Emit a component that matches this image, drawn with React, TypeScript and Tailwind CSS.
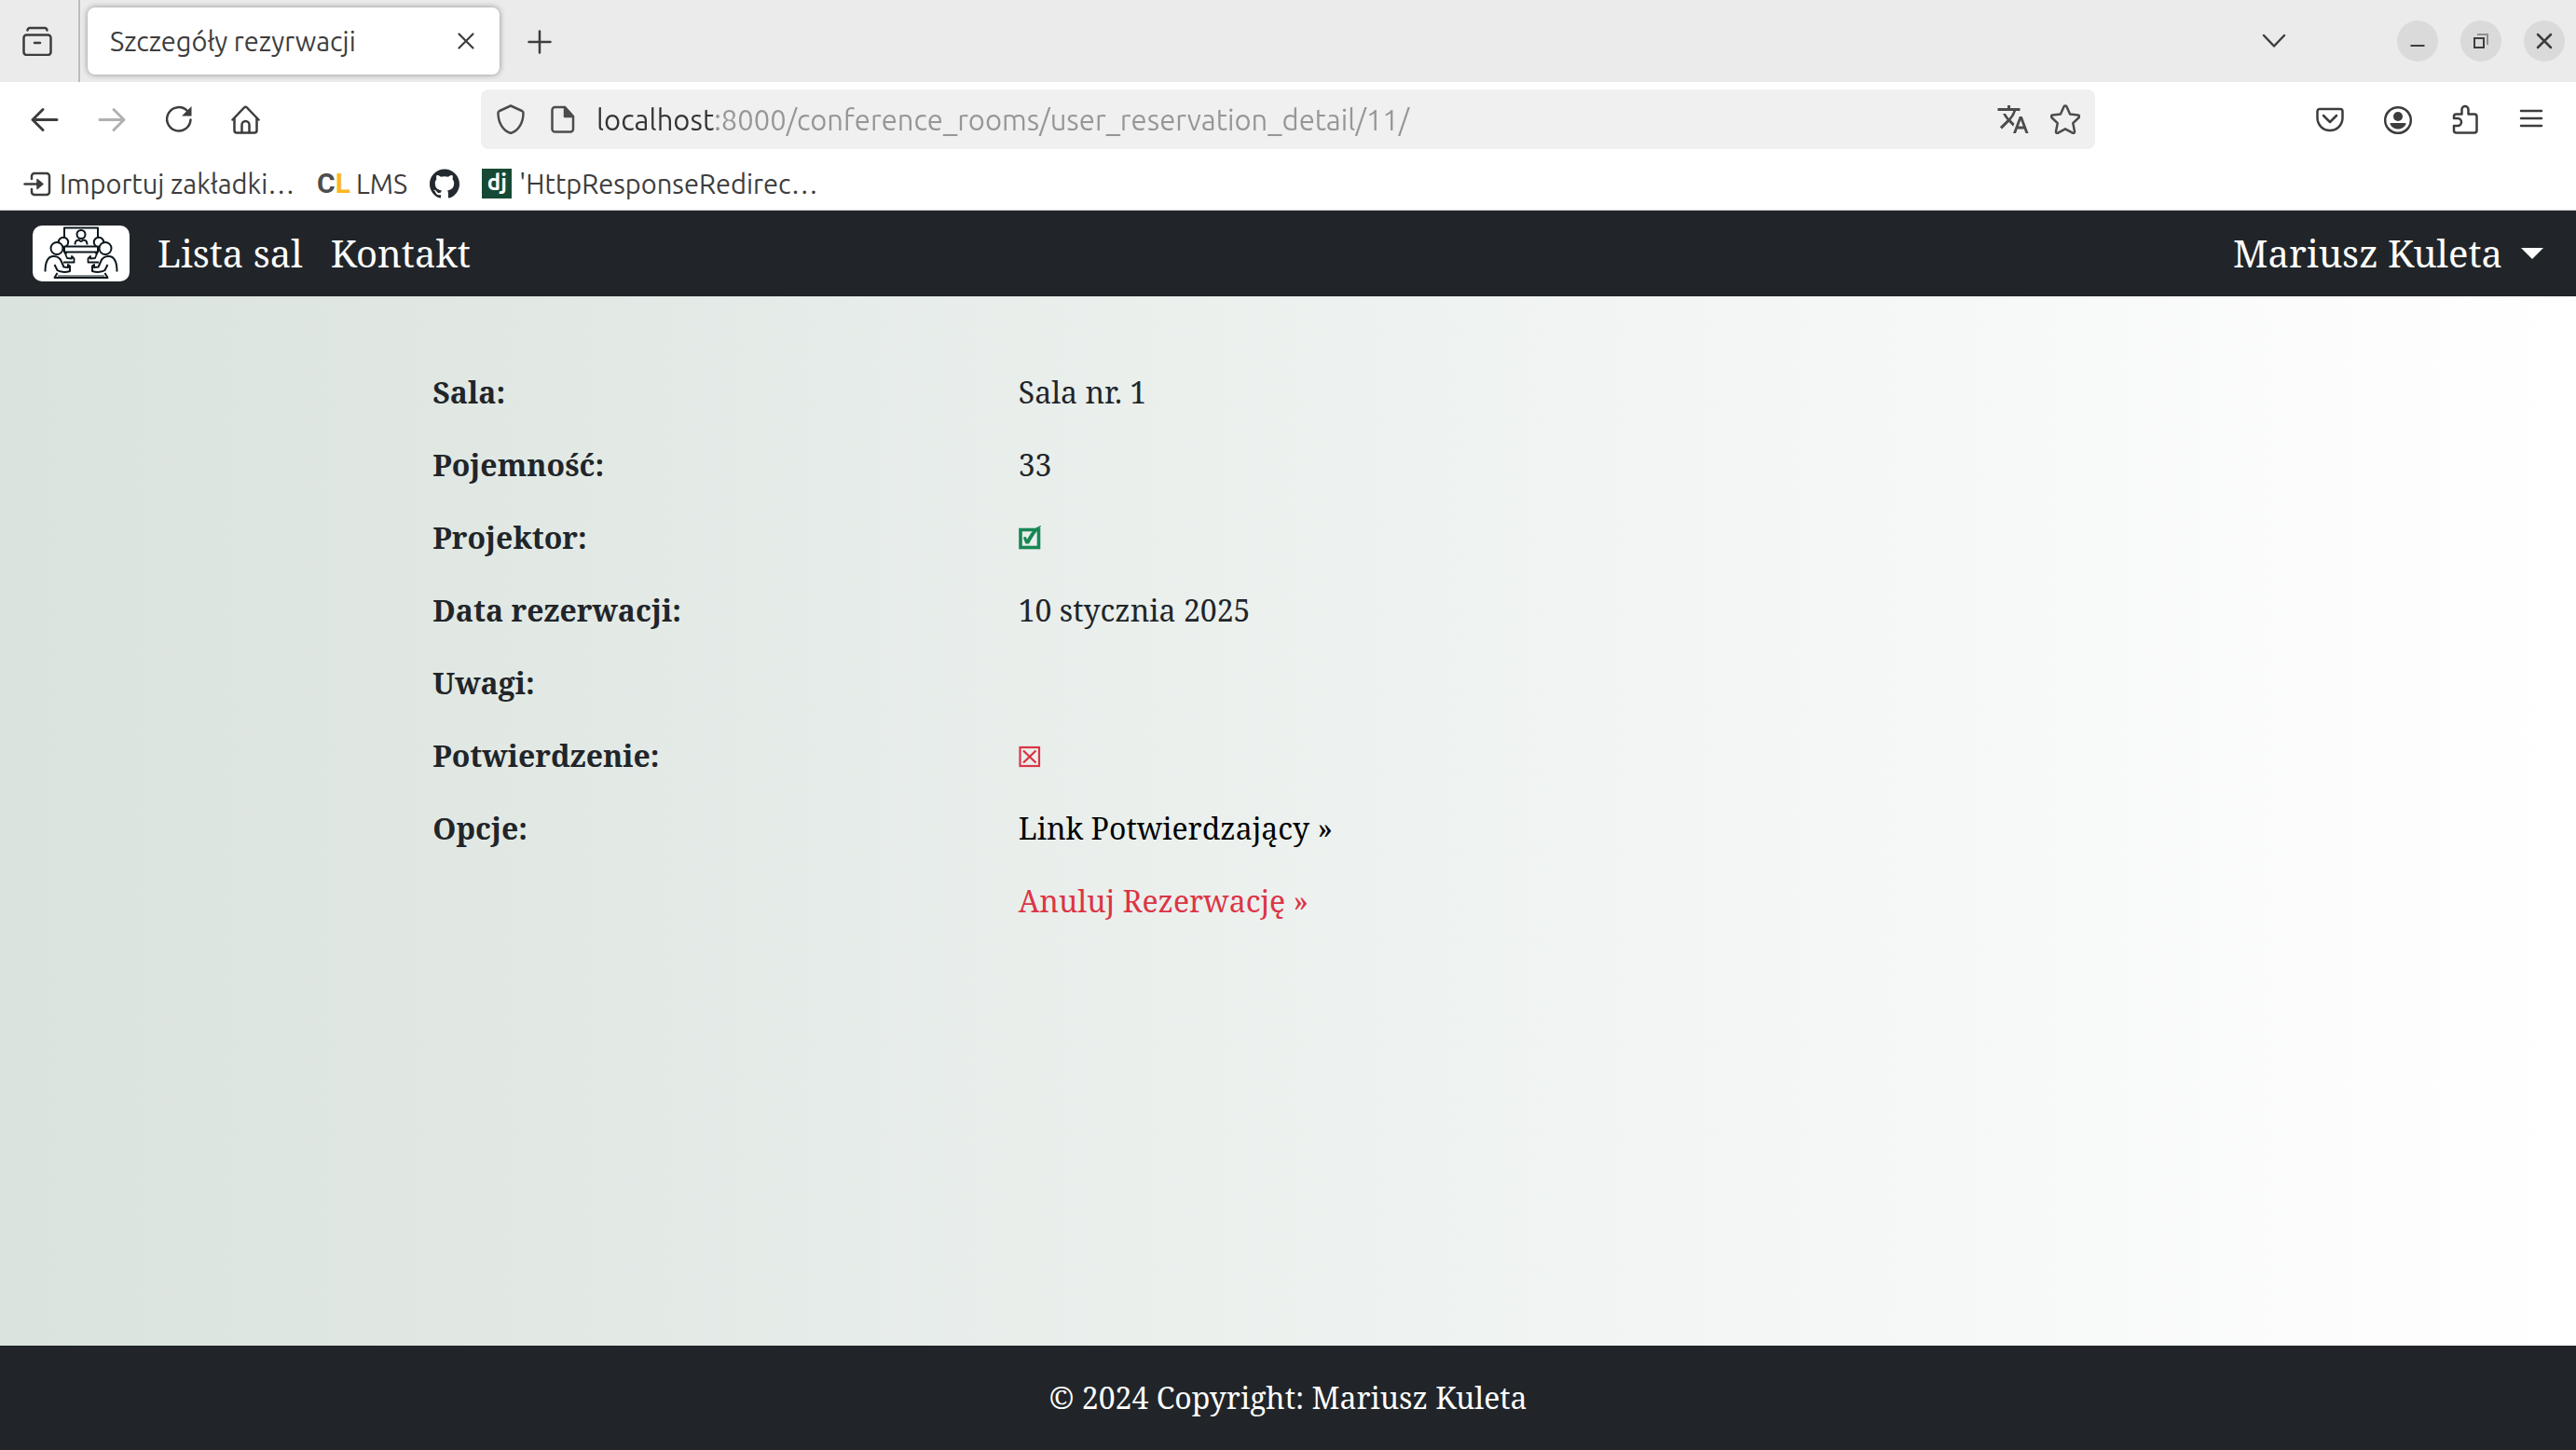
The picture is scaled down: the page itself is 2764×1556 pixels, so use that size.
import React from 'react';
import { MdTranslate } from 'react-icons/md';
import { SiGithub } from 'react-icons/si';

type IconProps = { children: React.ReactNode; className?: string };

/* 32-unit line icon used across the browser chrome */
function Icon({ children, className = 'size-8' }: IconProps) {
  return (
    <svg
      viewBox="0 0 32 32"
      className={className}
      fill="none"
      stroke="currentColor"
      strokeWidth="2.5"
      strokeLinecap="round"
      strokeLinejoin="round"
      aria-hidden="true"
    >
      {children}
    </svg>
  );
}

function ToolButton({ label, children, disabled }: { label: string; children: React.ReactNode; disabled?: boolean }) {
  return (
    <button
      type="button"
      aria-label={label}
      disabled={disabled}
      className="flex h-16 w-16 items-center justify-center rounded-lg disabled:text-[#b0b0b0]"
    >
      {children}
    </button>
  );
}

function WindowButton({ label, children }: { label: string; children: React.ReactNode }) {
  return (
    <button type="button" aria-label={label} className="flex size-11 items-center justify-center rounded-full bg-[#dadada]">
      <Icon>{children}</Icon>
    </button>
  );
}

function TabBar() {
  return (
    <div className="flex h-[88px] items-center bg-[#ebebeb]">
      <div className="flex h-full w-[86px] items-center border-r-2 border-[#bcbcbc] pl-2">
        <ToolButton label="Widok kart">
          <Icon>
            <rect x="1.5" y="9.5" width="29" height="21.5" rx="3" />
            <path d="M5.5 4.5c.3-1.700 1-2.500 2.500-2.500h16c1.500 0 2.200.8 2.500 2.500" />
            <path d="M13 18h6" />
          </Icon>
        </ToolButton>
      </div>
      <div className="ml-2 flex h-[72px] w-[442px] items-center justify-between rounded-lg bg-white pr-2 pl-6 shadow-[0_0_6px_rgba(0,0,0,0.4)]">
        <span>Szczegóły rezyrwacji</span>
        <button type="button" aria-label="Zamknij kartę" className="flex size-14 items-center justify-center">
          <Icon>
            <path d="M8.500 8.500l15 15M23.500 8.500l-15 15" strokeWidth="2.200" />
          </Icon>
        </button>
      </div>
      <div className="ml-[11px] flex-1">
        <ToolButton label="Nowa karta">
          <Icon>
            <path d="M16 5.500v23M4.500 17h23" />
          </Icon>
        </ToolButton>
      </div>
      <ToolButton label="Lista kart">
        <Icon>
          <path d="M5 10l11 11.500L27 10" />
        </Icon>
      </ToolButton>
      <div className="mr-3 ml-[100px] flex gap-6">
        <WindowButton label="Minimalizuj">
          <path d="M8.500 21h15" strokeWidth="2" strokeLinecap="butt" />
        </WindowButton>
        <WindowButton label="Przywróć">
          <path d="M12 9h11v11" stroke="#8f8f8f" strokeWidth="2" strokeLinecap="butt" strokeLinejoin="miter" />
          <rect x="9" y="13" width="10" height="10" strokeWidth="2" strokeLinejoin="miter" />
        </WindowButton>
        <WindowButton label="Zamknij">
          <path d="M9 9l14 14M23 9L9 23" />
        </WindowButton>
      </div>
    </div>
  );
}

function Toolbar() {
  return (
    <div className="flex h-20 items-center">
      <div className="flex w-[516px] gap-2 pl-4">
        <ToolButton label="Wstecz">
          <Icon>
            <path d="M14 5.500L3 16.500l11 11M3 16.500h26" strokeWidth="3" />
          </Icon>
        </ToolButton>
        <ToolButton label="Dalej" disabled>
          <Icon>
            <path d="M18 5.500l11 11-11 11M29 16.500H3" strokeWidth="3" />
          </Icon>
        </ToolButton>
        <ToolButton label="Odśwież">
          <Icon>
            <path d="M28.500 16.500A12.700 12.700 0 1 1 25 7" />
            <path d="M29.500 2v10.500H19z" fill="currentColor" stroke="none" />
          </Icon>
        </ToolButton>
        <ToolButton label="Strona startowa">
          <Icon>
            <path d="M1.500 16.500L14 3.500a2 2 0 0 1 3 0L29.500 16.500" />
            <path d="M3.500 15v13A2.500 2.500 0 0 0 6 30.500h19a2.500 2.500 0 0 0 2.500-2.500V15" />
            <path d="M11.500 30V22a4 4 0 0 1 8 0v8" />
          </Icon>
        </ToolButton>
      </div>
      <div className="flex h-16 flex-1 items-center rounded-lg bg-[#f0f0f0] text-[#4c4c4c]">
        <button type="button" aria-label="Ochrona" className="ml-1 flex size-14 items-center justify-center">
          <Icon>
            <path d="M16 1.500l12 5.500c.8.400 1.500 1 1.500 2 0 10-4.500 19-13.500 22C7 28 2.500 19 2.500 9c0-1 .7-1.600 1.500-2z" />
          </Icon>
        </button>
        <button type="button" aria-label="Informacje o stronie" className="flex size-14 items-center justify-center">
          <Icon>
            <path d="M7.500 3H18l9 10v13.500a3 3 0 0 1-3 3H7.500a3 3 0 0 1-3-3V6a3 3 0 0 1 3-3z" />
            <path d="M18 3v10h9z" fill="currentColor" />
          </Icon>
        </button>
        <input
          type="text"
          aria-label="Adres"
          defaultValue="localhost:8000/conference_rooms/user_reservation_detail/11/"
          className="ml-2 h-full min-w-0 flex-1 bg-[linear-gradient(to_right,#333333_127px,#969696_127px)] bg-clip-text text-[31px] text-transparent outline-none"
        />
        <button type="button" aria-label="Przetłumacz" className="flex size-14 items-center justify-center">
          <MdTranslate className="size-9" />
        </button>
        <button type="button" aria-label="Dodaj zakładkę" className="mr-1 flex size-14 items-center justify-center">
          <Icon>
            <path d="M14.600 2.300a1.600 1.600 0 0 1 2.800 0l3.700 8.200 8.700 1c1.300.2 1.800 1.600.9 2.500l-6.400 6.200 1.700 8.900c.2 1.300-1.100 2.200-2.200 1.600L16 26.300l-7.800 4.400c-1.100.6-2.400-.3-2.200-1.600l1.700-8.900L1.300 14c-.9-.9-.4-2.300.9-2.500l8.700-1z" />
          </Icon>
        </button>
      </div>
      <div className="flex w-[516px] justify-end gap-2 pr-4">
        <ToolButton label="Pocket">
          <Icon>
            <path d="M5 5h22a2.500 2.500 0 0 1 2.500 2.500V14.500a13 13 0 0 1-27 0V7.500A2.500 2.500 0 0 1 5 5z" />
            <path d="M9 12l7 7 7-7" />
          </Icon>
        </ToolButton>
        <ToolButton label="Konto">
          <Icon>
            <circle cx="17" cy="17" r="13.800" />
            <circle cx="17" cy="13" r="5" fill="currentColor" stroke="none" />
            <path d="M9.500 20h15c1 0 1.300.9.800 1.800C23.500 24.800 20.500 26.500 17 26.500s-6.500-1.700-8.300-4.700c-.5-.9-.2-1.800.8-1.800z" fill="currentColor" stroke="none" />
          </Icon>
        </ToolButton>
        <ToolButton label="Rozszerzenia">
          <Icon>
            <path d="M13.500 10.500V5.500a3.500 3.500 0 0 1 7 0v5H27A2.500 2.500 0 0 1 29.500 13v15a2.500 2.500 0 0 1-2.500 2.500H7.500A2.500 2.500 0 0 1 5 28v-5h4a4 4 0 0 0 0-8H5v-2a2.500 2.500 0 0 1 2.500-2.500z" />
          </Icon>
        </ToolButton>
        <ToolButton label="Menu">
          <Icon>
            <path d="M5 7h22M5 15h22M5 23h22" />
          </Icon>
        </ToolButton>
      </div>
    </div>
  );
}

function Bookmarks() {
  return (
    <nav aria-label="Zakładki" className="flex h-[58px] items-center gap-6 border-b border-[#cccccc] pl-6">
      <a href="#import" className="flex items-center gap-2">
        <Icon>
          <path d="M10 11V8a3 3 0 0 1 3-3h13a3 3 0 0 1 3 3v17a3 3 0 0 1-3 3H13a3 3 0 0 1-3-3v-3" />
          <path d="M2.500 16.500h15" />
          <path d="M16 11.500l6 5-6 5z" fill="currentColor" strokeWidth="1.500" />
        </Icon>
        Importuj zakładki…
      </a>
      <a href="#lms" className="flex items-center gap-2">
        <span className="w-[34px] font-['Roboto'] text-[30px] leading-8 font-bold text-[#4d4d4d]" aria-hidden="true">
          C<span className="text-[#fbb81f]">L</span>
        </span>
        LMS
      </a>
      <a href="#github" aria-label="GitHub">
        <SiGithub className="size-8 text-[#24292f]" />
      </a>
      <a href="#django" className="flex items-center gap-2">
        <span
          className="flex size-8 items-center justify-center bg-[#174a34] pb-0.5 text-2xl leading-6 font-bold text-white"
          aria-hidden="true"
        >
          dj
        </span>
        'HttpResponseRedirec…
      </a>
    </nav>
  );
}

/* Meeting participants around a table facing a screen */
function MeetingLogo() {
  return (
    <svg
      viewBox="0 0 104 60"
      className="h-[60px] w-[104px] rounded-[10px] bg-white"
      fill="none"
      stroke="#0d171c"
      strokeWidth="2"
      strokeLinejoin="round"
      role="img"
      aria-label="Sale konferencyjne"
    >
      <path d="M34 14V2.500h36V14" />
      <circle cx="52" cy="9.500" r="4.500" />
      <path d="M45.500 20.500c0-3 1.500-5 4-5 .8 0 1.500 1.500 2.500 1.500s1.700-1.500 2.500-1.500c2.500 0 4 2 4 5" />
      <circle cx="33" cy="18" r="5.200" />
      <circle cx="71" cy="18" r="5.200" />
      <path d="M34 22.500h36v6H34z" fill="#fff" />
      <path d="M36 28.500v2M68 28.500v2" />
      <circle cx="26" cy="24.500" r="6.500" fill="#fff" />
      <circle cx="78" cy="24.500" r="6.500" fill="#fff" />
      <path d="M34.500 29l2.500 6 5 .500v-2.500l2.500 2.500v4H33M69.500 29L67 35l-5 .500v-2.500l-2.500 2.500v4H71" strokeWidth="1.800" />
      <path d="M13.500 49.500c0-10 2-16.500 9-16.500 5 0 7.500 3 8.500 6l2.500 5.500 4.500.500v-3l2 1.500v5.500c-5 1.500-11 1-13.500-1l-3-6" />
      <path d="M90.500 49.500c0-10-2-16.500-9-16.500-5 0-7.500 3-8.500 6l-2.500 5.500-4.500.500v-3L64 43.500v5.500c5 1.500 11 1 13.500-1l3-6" />
      <path d="M26.500 51l-3 5h57l-3-5" />
      <path d="M27 54h50" strokeWidth="1" />
    </svg>
  );
}

function SiteNav() {
  return (
    <nav className="flex h-[92px] items-center bg-[#212529] px-[35px] text-[40px] text-white">
      <a href="#home" className="mr-[30px]">
        <MeetingLogo />
      </a>
      <a href="#rooms" className="mr-[30px]">
        Lista sal
      </a>
      <a href="#contact" className="flex-1">
        Kontakt
      </a>
      <button type="button" className="flex items-center gap-5">
        Mariusz Kuleta
        <svg viewBox="0 0 24 12" className="h-3 w-6" fill="currentColor" aria-hidden="true">
          <path d="M0 0h24L12 12z" />
        </svg>
      </button>
    </nav>
  );
}

function CheckedMark() {
  return (
    <svg viewBox="0 0 24 26" className="h-[26px] w-6 text-[#198754]" role="img" aria-label="Tak">
      <rect x="2" y="4.500" width="19.500" height="19" fill="none" stroke="currentColor" strokeWidth="3.600" />
      <path d="M5 13c1.500-1.800 3.500-1.200 4 2C12.500 9 16 2.500 24 0l-.500 1.500C18.500 6.500 14.500 13 11 19.500H7.500C6.500 17 5.500 15 5 13z" fill="currentColor" />
    </svg>
  );
}

function CrossedMark() {
  return (
    <svg viewBox="0 0 24 26" className="h-[26px] w-6 text-[#dc3545]" fill="none" stroke="currentColor" role="img" aria-label="Nie">
      <rect x="1.500" y="4" width="20.500" height="20" strokeWidth="2.200" />
      <path d="M5 7.500l13.500 13M18.500 7.500L5 20.500" strokeWidth="2.400" />
    </svg>
  );
}

function Row({ label, children }: { label: string; children?: React.ReactNode }) {
  return (
    <div className="grid grid-cols-3">
      <dt className="px-[22px] py-[15px] font-bold">{label}</dt>
      <dd className="col-span-2 px-6">{children}</dd>
    </div>
  );
}

function Value({ children }: { children: React.ReactNode }) {
  return <div className="flex min-h-[78px] items-center">{children}</div>;
}

export default function App() {
  return (
    <div className="flex min-h-screen flex-col bg-white font-['Noto_Serif',serif] text-[32px] leading-[48px] text-[#212529]">
      <header className="bg-white font-['Ubuntu','Noto_Sans',sans-serif] text-[29px] leading-9 text-[#3d3d3d]">
        <TabBar />
        <Toolbar />
        <Bookmarks />
      </header>
      <SiteNav />
      <main className="flex-1 bg-linear-to-r from-[#dae3de] to-white pt-16">
        <dl className="mx-auto w-[68%]">
          <Row label="Sala:">
            <Value>Sala nr. 1</Value>
          </Row>
          <Row label="Pojemność:">
            <Value>33</Value>
          </Row>
          <Row label="Projektor:">
            <Value>
              <CheckedMark />
            </Value>
          </Row>
          <Row label="Data rezerwacji:">
            <Value>10 stycznia 2025</Value>
          </Row>
          <Row label="Uwagi:" />
          <Row label="Potwierdzenie:">
            <Value>
              <CrossedMark />
            </Value>
          </Row>
          <Row label="Opcje:">
            <Value>
              <a href="#confirm" className="text-black">
                Link Potwierdzający »
              </a>
            </Value>
            <Value>
              <a href="#cancel" className="text-[#dc3545]">
                Anuluj Rezerwację »
              </a>
            </Value>
          </Row>
        </dl>
      </main>
      <footer className="bg-[#212529] py-8 text-center text-white">© 2024 Copyright: Mariusz Kuleta</footer>
    </div>
  );
}
